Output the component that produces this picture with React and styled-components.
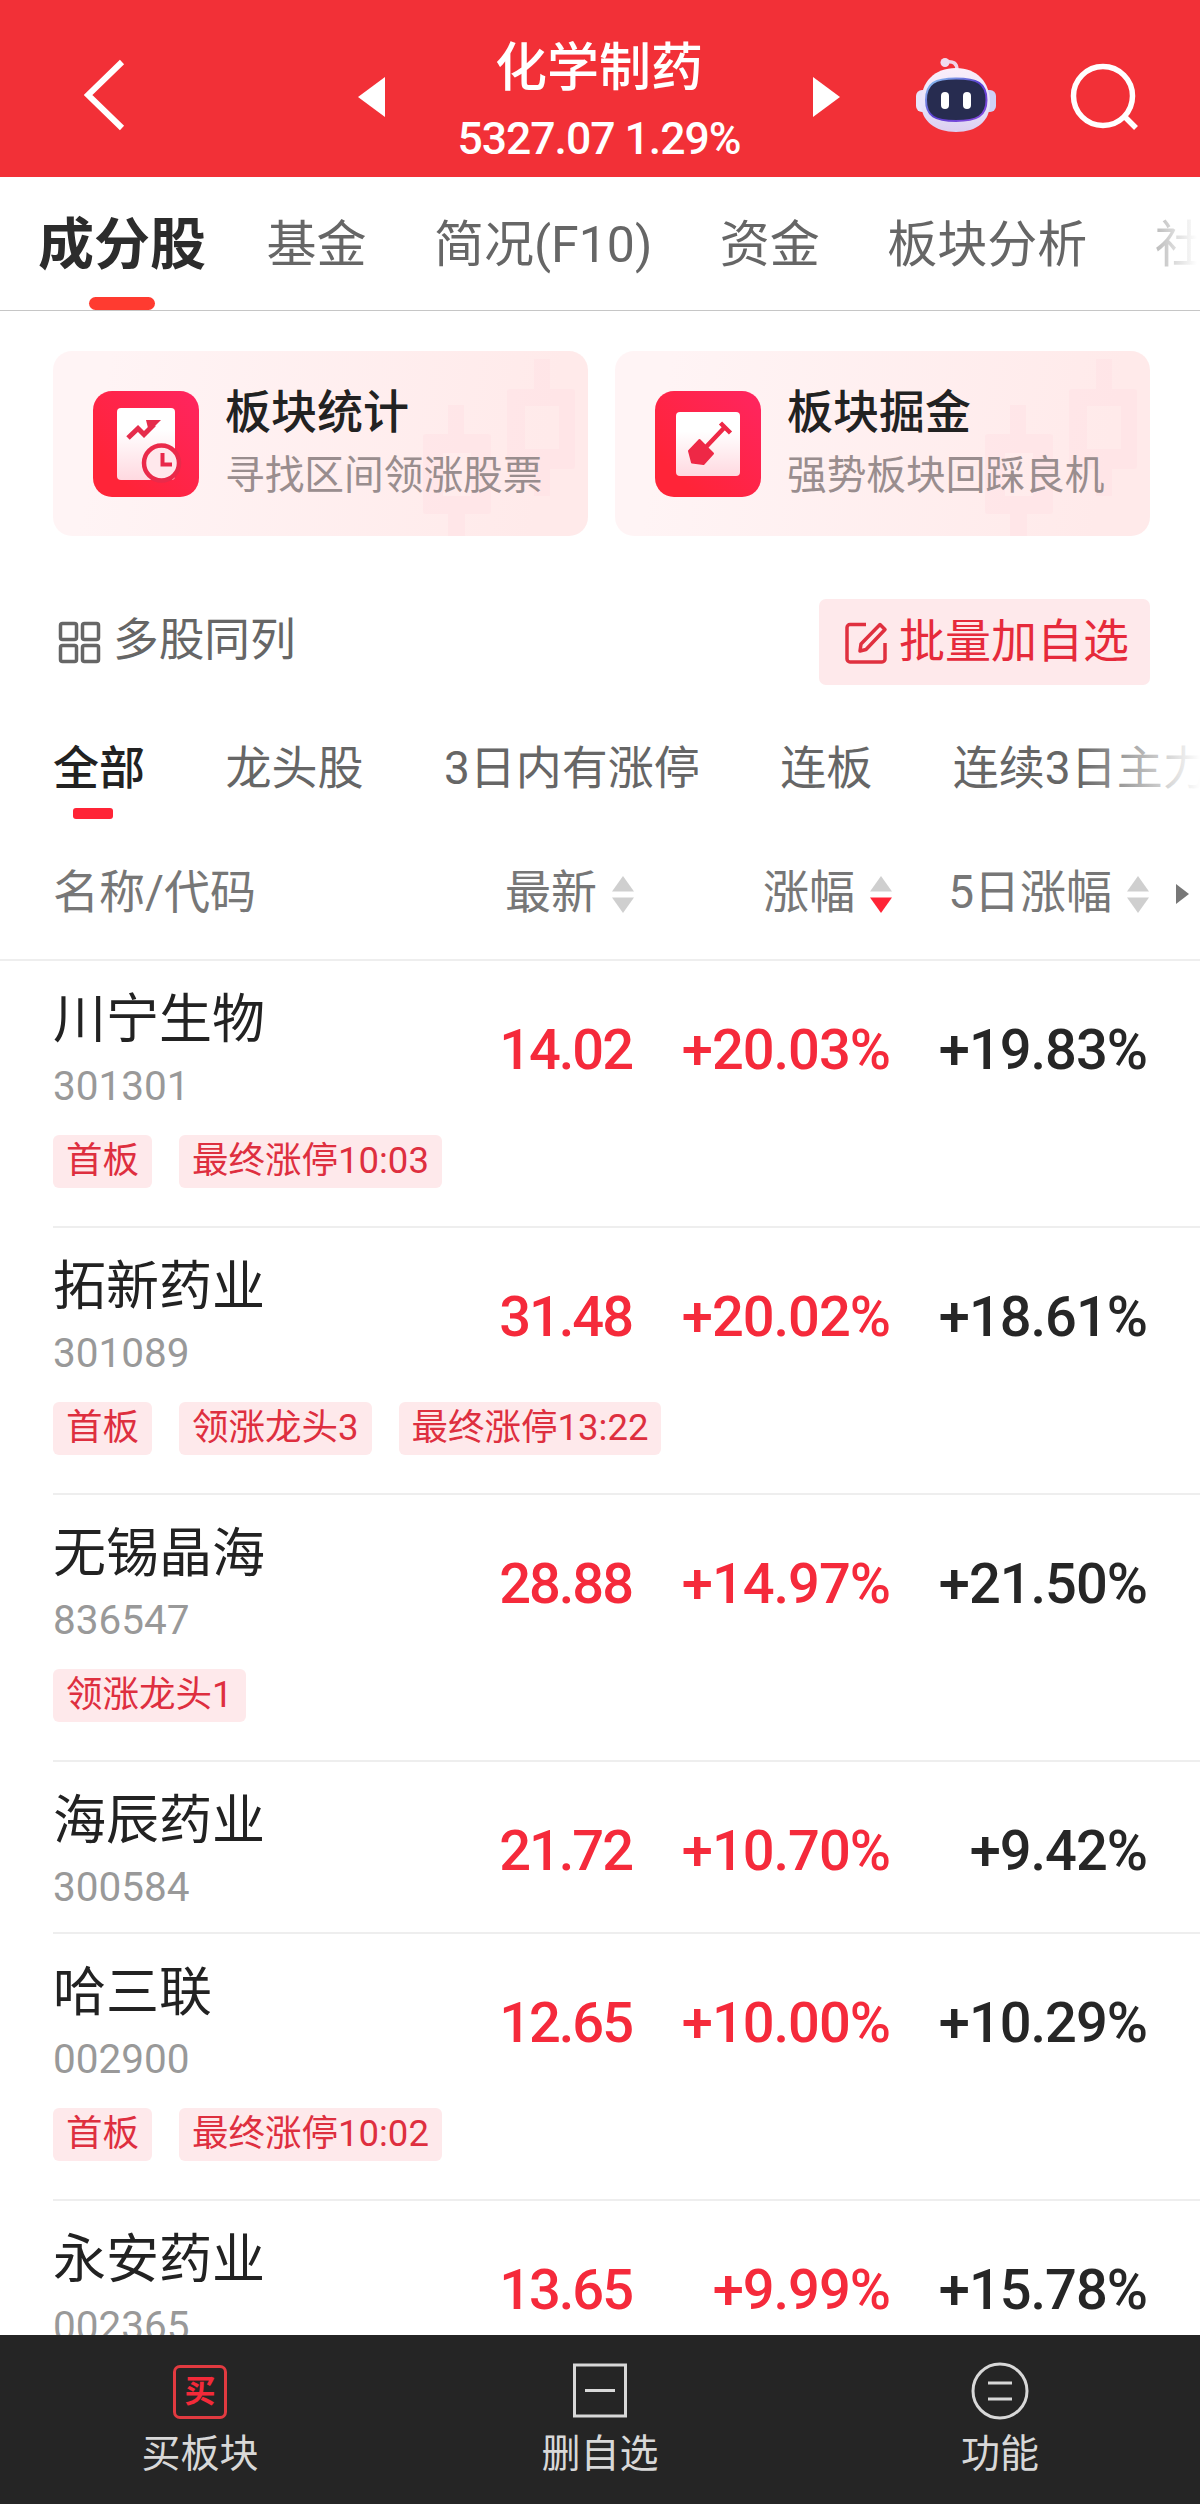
import React from 'react';
import styled, { createGlobalStyle } from 'styled-components';

const GlobalStyle = createGlobalStyle`
    *{
        box-sizing:border-box;
    }
    body{
        margin:0;
        background:#fff;
        font-family:Roboto, "Noto Sans CJK SC", sans-serif;
        color:#222;
    }
    svg{
        display:block;
        flex:none;
    }
`;

const Page = styled.div`
    width:1200px;
    height:2504px;
    display:flex;
    flex-direction:column;
    overflow:hidden;
`;

const Header = styled.header`
    height:177px;
    flex:none;
    display:flex;
    align-items:flex-start;
    background:#f23037;
    color:#fff;
    padding:0 60px 0 84px;
`;

const HeaderIcon = styled.div`
    margin-top:${props => props.$top}px;
    margin-left:${props => props.$left || 0}px;
`;

const HeaderTitle = styled.div`
    width:430px;
    padding-top:38px;
    display:flex;
    flex-direction:column;
    align-items:center;
    white-space:nowrap;
    h1{
        margin:0;
        font-size:52px;
        line-height:62px;
        font-weight:500;
    }
    span{
        font-size:44.5px;
        line-height:54px;
        margin-top:12px;
        font-weight:500;
        letter-spacing:-1px;
    }
`;

const TabBar = styled.nav`
    height:134px;
    flex:none;
    display:flex;
    gap:67.5px;
    padding-left:38px;
    border-bottom:1px solid #c6c6c6;
    overflow:hidden;
    white-space:nowrap;
`;

const Tab = styled.a`
    display:flex;
    flex-direction:column;
    align-items:center;
    flex:none;
    font-size:${props => props.$active ? 56 : 50}px;
    font-weight:${props => props.$active ? 700 : 400};
    color:${props => props.$active ? '#2c2c2c' : props.$faded ? 'transparent' : '#666'};
    background:${props => props.$faded ? 'linear-gradient(90deg, #bbb, #fff 42px)' : 'none'};
    background-clip:${props => props.$faded ? 'text' : 'border-box'};
    line-height:137px;
    margin-right:${props => props.$active ? -7 : 0}px;
    &::after{
        content:"";
        display:${props => props.$active ? 'block' : 'none'};
        width:66px;
        height:13px;
        margin-top:-17px;
        border-radius:7px;
        background:#ff3b30;
    }
`;

const Cards = styled.section`
    display:flex;
    gap:27px;
    padding:40px 50px 0 53px;
`;

const Card = styled.div`
    flex:1;
    height:185px;
    display:flex;
    align-items:center;
    position:relative;
    padding-left:40px;
    border-radius:19px;
    overflow:hidden;
    background:linear-gradient(100deg, #fff4f5 10%, #ffeaea 90%);
`;

const CardPattern = styled.svg`
    position:absolute;
    right:0;
    top:0;
`;

const CardText = styled.div`
    position:relative;
    margin-left:26px;
    white-space:nowrap;
    h2{
        margin:0;
        font-size:46px;
        line-height:60px;
        font-weight:500;
    }
    p{
        margin:4px 0 0;
        font-size:39.7px;
        line-height:60px;
        color:#998d8e;
    }
`;

const Toolbar = styled.section`
    display:flex;
    justify-content:space-between;
    align-items:center;
    height:86px;
    margin:63px 50px 0 58px;
`;

const ToolLink = styled.span`
    display:flex;
    align-items:center;
    gap:12px;
    font-size:45.7px;
    color:#666;
    line-height:80px;
    svg{
        margin-top:1px;
    }
    b{
        font-weight:400;
        margin-top:-3px;
    }
`;

const BatchButton = styled(ToolLink)`
    width:331px;
    height:86px;
    padding-left:25px;
    gap:11px;
    border-radius:7px;
    background:#fee9eb;
    color:#e62a3b;
    font-size:46px;
`;

const Filters = styled.nav`
    height:134px;
    display:flex;
    gap:80.5px;
    padding:43px 0 0 53px;
    overflow:hidden;
    white-space:nowrap;
    position:relative;
    &::after{
        content:"";
        position:absolute;
        right:0;
        top:0;
        width:120px;
        height:134px;
        background:linear-gradient(90deg, rgba(255,255,255,0), #fff);
    }
`;

const Filter = styled.a`
    flex:none;
    font-size:46px;
    line-height:80px;
    font-weight:${props => props.$active ? 500 : 400};
    color:${props => props.$active ? '#222' : '#666'};
    &::after{
        content:"";
        display:${props => props.$active ? 'block' : 'none'};
        width:40px;
        height:11px;
        margin-left:20px;
        border-radius:3px;
        background:#ff2436;
    }
`;

const TableHead = styled.div`
    height:142px;
    flex:none;
    display:grid;
    grid-template-columns:323px 258px 258px 257px 1fr;
    align-items:center;
    padding:6px 0 0 53px;
    border-bottom:2px solid #eee;
    font-size:46px;
    color:#777;
    white-space:nowrap;
`;

const HeadCell = styled.div`
    display:flex;
    align-items:center;
    justify-content:${props => props.$left ? 'flex-start' : 'flex-end'};
    gap:15px;
    line-height:80px;
    svg{
        margin-top:4px;
    }
`;

const ScrollArrow = styled.svg`
    margin:4px 0 0 27px;
`;

const Rows = styled.div`
    flex:1;
    min-height:0;
    overflow:hidden;
`;

const Row = styled.div`
    margin-left:53px;
    height:${props => props.$tall ? 267 : 172}px;
    border-bottom:2px solid #eee;
`;

const RowMain = styled.div`
    height:174px;
    display:grid;
    grid-template-columns:323px 258px 258px 257px;
`;

const Stock = styled.div`
    padding-top:26px;
    white-space:nowrap;
    strong{
        display:block;
        font-size:53px;
        line-height:66px;
        font-weight:400;
    }
    span{
        display:block;
        margin-top:8px;
        font-size:40.5px;
        line-height:50px;
        color:#999;
    }
`;

const Value = styled.div`
    text-align:right;
    padding-right:2px;
    font-size:56px;
    line-height:178px;
    letter-spacing:${props => props.$tight ? -2 : -1}px;
    font-weight:500;
    color:${props => props.$up ? '#f52a3b' : '#262626'};
`;

const Tags = styled.div`
    display:flex;
    gap:27px;
`;

const Tag = styled.span`
    height:53px;
    padding:0 13px;
    border-radius:6px;
    background:#fee9eb;
    color:#de2f3f;
    font-size:36.5px;
    line-height:52px;
    white-space:nowrap;
`;

const BottomBar = styled.footer`
    height:169px;
    flex:none;
    display:grid;
    grid-template-columns:repeat(3, 1fr);
    background:#252525;
    color:#d8d8d8;
`;

const BottomItem = styled.div`
    display:flex;
    flex-direction:column;
    align-items:center;
    padding-top:26px;
    font-size:39px;
    line-height:60px;
    svg{
        margin-bottom:4px;
    }
`;

const BuyIcon = styled.i`
    width:54px;
    height:54px;
    margin:4px 0 5px;
    border:3px solid #e23a40;
    border-radius:7px;
    color:#f32a39;
    font-style:normal;
    font-weight:700;
    font-size:31px;
    line-height:48px;
    text-align:center;
`;

const Robot = () => (
    <svg width="82" height="78" viewBox="0 0 82 78">
        <defs>
            <linearGradient id="shell" x1="0" y1="0" x2="0" y2="1">
                <stop offset="0" stopColor="#fbeefa" />
                <stop offset="0.6" stopColor="#e6e2fa" />
                <stop offset="1" stopColor="#dccdf0" />
            </linearGradient>
            <linearGradient id="rim" x1="0" y1="0" x2="1" y2="1">
                <stop offset="0" stopColor="#8fd0f5" />
                <stop offset="0.5" stopColor="#5a3fd0" />
                <stop offset="1" stopColor="#8a4be0" />
            </linearGradient>
        </defs>
        <path d="M31 5 Q42 3 42 13" fill="none" stroke="#f0d3e6" strokeWidth="3.500" />
        <circle cx="30" cy="5.500" r="4.500" fill="#f0dcee" />
        <rect x="1" y="33" width="14" height="22" rx="6" fill="#e8e4fa" />
        <rect x="67" y="33" width="14" height="22" rx="6" fill="#cfd0f6" />
        <path d="M41 11 C62 11 75 25 75 46 C75 64 62 75 41 75 C20 75 6 64 6 46 C6 25 19 11 41 11Z" fill="url(#shell)" />
        <path d="M41 21.500 C62 21.500 71.500 26 71.500 43 C71.500 59 62 64 41 64 C20 64 11 59 11 43 C11 26 20 21.500 41 21.500Z" fill="#272c50" stroke="url(#rim)" strokeWidth="2" />
        <rect x="26" y="35" width="8" height="17" rx="4" fill="#fff" />
        <rect x="48" y="35" width="8" height="17" rx="4" fill="#fff" />
    </svg>
);

const CardBackground = () => (
    <CardPattern width="200" height="185" viewBox="0 0 200 185">
        <g fill="#ffdfe3" fillOpacity="0.4">
            <path d="M60 54h16v29h24a3 3 0 0 1 3 3v74a3 3 0 0 1-3 3H77v22H60v-22H38a3 3 0 0 1-3-3V86a3 3 0 0 1 3-3h22z M55 102v43h28v-43z" fillRule="evenodd" />
            <path d="M146 8h16v30h22a3 3 0 0 1 3 3v74a3 3 0 0 1-3 3h-22v27h-16v-27h-24a3 3 0 0 1-3-3V41a3 3 0 0 1 3-3h24z M137 55v43h34v-43z" fillRule="evenodd" />
        </g>
    </CardPattern>
);

const CardGradients = () => (
    <defs>
        <linearGradient id="tile" x1="0" y1="1" x2="1" y2="0">
            <stop offset="0.2" stopColor="#ff2438" />
            <stop offset="1" stopColor="#ff2560" />
        </linearGradient>
        <linearGradient id="paper" x1="0" y1="0" x2="0" y2="1">
            <stop offset="0.3" stopColor="#fff" />
            <stop offset="1" stopColor="#ffd9e0" />
        </linearGradient>
    </defs>
);

const StatsIcon = () => (
    <svg width="106" height="106" viewBox="0 0 106 106">
        <CardGradients />
        <rect width="106" height="106" rx="19" fill="url(#tile)" />
        <rect x="24" y="17" width="58" height="72" rx="4" fill="url(#paper)" />
        <path d="M35 47l10-9.500 6 6 10-10" fill="none" stroke="#e52c4b" strokeWidth="5" />
        <path d="M53 29h15L56 41z" fill="#e52c4b" />
        <circle cx="68.500" cy="72" r="17.500" fill="#ffe8ec" stroke="#ea2a4a" strokeWidth="4.500" />
        <path d="M69.500 62v11.500H79" fill="none" stroke="#e8284a" strokeWidth="4" />
    </svg>
);

const ShovelIcon = () => (
    <svg width="106" height="106" viewBox="0 0 106 106">
        <rect width="106" height="106" rx="19" fill="url(#tile)" />
        <rect x="21" y="21" width="64" height="64" rx="4" fill="url(#paper)" />
        <path d="M44.500 49L58 62.500 48.500 73 37 71.500 34 60z" fill="#ee2846" stroke="#ee2846" strokeWidth="2" strokeLinejoin="round" />
        <path d="M51 56l18-19M65.500 32l10 10" fill="none" stroke="#ee2846" strokeWidth="4.500" />
    </svg>
);

const SortIcon = ({ down }) => (
    <svg width="22" height="37" viewBox="0 0 22 37">
        <path d="M11 0l11 15.500H0z" fill="#cfcfcf" />
        <path d="M11 37l11-15.500H0z" fill={down ? '#ff2436' : '#cfcfcf'} />
    </svg>
);

const tabs = ['成分股', '基金', '简况(F10)', '资金', '板块分析', '社区'];
const filters = ['全部', '龙头股', '3日内有涨停', '连板', '连续3日主力'];

const stocks = [
    { name: '川宁生物', code: '301301', price: '14.02', change: '+20.03%', five: '+19.83%', tags: ['首板', '最终涨停10:03'] },
    { name: '拓新药业', code: '301089', price: '31.48', change: '+20.02%', five: '+18.61%', tags: ['首板', '领涨龙头3', '最终涨停13:22'] },
    { name: '无锡晶海', code: '836547', price: '28.88', change: '+14.97%', five: '+21.50%', tags: ['领涨龙头1'] },
    { name: '海辰药业', code: '300584', price: '21.72', change: '+10.70%', five: '+9.42%', tags: [] },
    { name: '哈三联', code: '002900', price: '12.65', change: '+10.00%', five: '+10.29%', tags: ['首板', '最终涨停10:02'] },
    { name: '永安药业', code: '002365', price: '13.65', change: '+9.99%', five: '+15.78%', tags: [] },
];

const StockRow = ({ stock }) => (
    <Row $tall={stock.tags.length > 0}>
        <RowMain>
            <Stock>
                <strong>{stock.name}</strong>
                <span>{stock.code}</span>
            </Stock>
            <Value $up $tight>{stock.price}</Value>
            <Value $up>{stock.change}</Value>
            <Value>{stock.five}</Value>
        </RowMain>
        {stock.tags.length > 0 && (
            <Tags>
                {stock.tags.map(tag => <Tag key={tag}>{tag}</Tag>)}
            </Tags>
        )}
    </Row>
);

export default function App() {
    return (
        <Page>
            <GlobalStyle />
            <Header>
                <HeaderIcon $top={59}>
                    <svg width="42" height="72" viewBox="0 0 42 72">
                        <path d="M38 3L4 36l34 33" fill="none" stroke="#fff" strokeWidth="6" />
                    </svg>
                </HeaderIcon>
                <HeaderIcon $top={77} $left={232}>
                    <svg width="27" height="40" viewBox="0 0 27 40"><path d="M27 0v40L0 20z" fill="#fff" /></svg>
                </HeaderIcon>
                <HeaderTitle>
                    <h1>化学制药</h1>
                    <span>5327.07 1.29%</span>
                </HeaderTitle>
                <HeaderIcon $top={77}>
                    <svg width="27" height="40" viewBox="0 0 27 40"><path d="M0 0v40l27-20z" fill="#fff" /></svg>
                </HeaderIcon>
                <HeaderIcon $top={57} $left={75}>
                    <Robot />
                </HeaderIcon>
                <HeaderIcon $top={62} $left={73}>
                    <svg width="70" height="70" viewBox="0 0 70 70">
                        <circle cx="33" cy="34" r="29.500" fill="none" stroke="#fff" strokeWidth="5.500" />
                        <path d="M54 54l12 12" stroke="#fff" strokeWidth="5.500" />
                    </svg>
                </HeaderIcon>
            </Header>
            <TabBar>
                {tabs.map((tab, i) => (
                    <Tab key={tab} $active={i === 0} $faded={i === tabs.length - 1}>{tab}</Tab>
                ))}
            </TabBar>
            <Cards>
                <Card>
                    <CardBackground />
                    <StatsIcon />
                    <CardText>
                        <h2>板块统计</h2>
                        <p>寻找区间领涨股票</p>
                    </CardText>
                </Card>
                <Card>
                    <CardBackground />
                    <ShovelIcon />
                    <CardText>
                        <h2>板块掘金</h2>
                        <p>强势板块回踩良机</p>
                    </CardText>
                </Card>
            </Cards>
            <Toolbar>
                <ToolLink>
                    <svg width="43" height="43" viewBox="0 0 43 43" fill="none" stroke="#666" strokeWidth="3.500">
                        <rect x="2.500" y="2.500" width="16" height="16" rx="2" />
                        <rect x="24.500" y="2.500" width="16" height="16" rx="2" />
                        <rect x="2.500" y="24.500" width="16" height="16" rx="2" />
                        <rect x="24.500" y="24.500" width="16" height="16" rx="2" />
                    </svg>
                    <b>多股同列</b>
                </ToolLink>
                <BatchButton>
                    <svg width="44" height="44" viewBox="0 0 44 44" fill="none" stroke="#e0303f" strokeWidth="3.500">
                        <path d="M22 3.500H6a3 3 0 0 0-3 3V38a3 3 0 0 0 3 3h32a3 3 0 0 0 3-3V22" />
                        <path d="M36 3.500l5 5-19 20-6 1.500 1-7z" strokeLinejoin="round" />
                    </svg>
                    <b>批量加自选</b>
                </BatchButton>
            </Toolbar>
            <Filters>
                {filters.map((filter, i) => (
                    <Filter key={filter} $active={i === 0}>{filter}</Filter>
                ))}
            </Filters>
            <TableHead>
                <HeadCell $left>名称/代码</HeadCell>
                <HeadCell>最新<SortIcon /></HeadCell>
                <HeadCell>涨幅<SortIcon down /></HeadCell>
                <HeadCell>5日涨幅<SortIcon /></HeadCell>
                <ScrollArrow width="13" height="20" viewBox="0 0 13 20"><path d="M0 0v20l13-10z" fill="#777" /></ScrollArrow>
            </TableHead>
            <Rows>
                {stocks.map(stock => <StockRow key={stock.code} stock={stock} />)}
            </Rows>
            <BottomBar>
                <BottomItem>
                    <BuyIcon>买</BuyIcon>
                    买板块
                </BottomItem>
                <BottomItem>
                    <svg width="58" height="59" viewBox="0 0 58 59" fill="none" stroke="#d8d8d8" strokeWidth="3">
                        <path d="M3.500 4h51v51h-51zM14 29.500h30" />
                    </svg>
                    删自选
                </BottomItem>
                <BottomItem>
                    <svg width="58" height="59" viewBox="0 0 58 59" fill="none" stroke="#d8d8d8" strokeWidth="3">
                        <circle cx="29" cy="30" r="27" />
                        <path d="M17 22h24M17 38h24" />
                    </svg>
                    功能
                </BottomItem>
            </BottomBar>
        </Page>
    );
}
